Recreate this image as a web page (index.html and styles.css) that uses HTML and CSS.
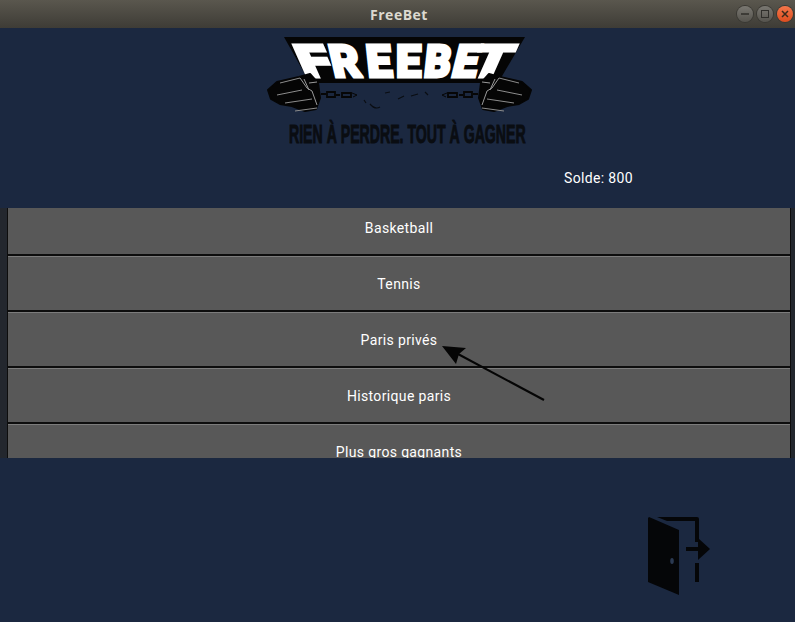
FILE: index.html
```html
<!DOCTYPE html>
<html lang="fr">
<head>
    <meta charset="UTF-8">
    <title>FreeBet</title>
    <link rel="stylesheet" href="styles.css">
</head>
<body>

<div class="titlebar">
    <span></span>
    <span class="title">FreeBet</span>
    <div class="win-btns">
        <span class="win-btn"><svg width="16" height="16" viewBox="0 0 16 16"><path d="M4 8h8" stroke="#2f2e2a" stroke-width="1.5"/></svg></span>
        <span class="win-btn"><svg width="16" height="16" viewBox="0 0 16 16"><rect x="4.5" y="4.5" width="7" height="7" fill="none" stroke="#2f2e2a"/></svg></span>
        <span class="win-btn win-close"><svg width="16" height="16" viewBox="0 0 16 16"><path d="M5 5l6 6M11 5l-6 6" stroke="#3a2a1c" stroke-width="1.5"/></svg></span>
    </div>
</div>

<div class="logo">
    <!-- viewBox keeps the window coordinates of the logo -->
    <svg width="281" height="120" viewBox="257 28 281 120">
        <defs>
            <g id="fist">
                <path d="M268 90 L277 82 L299 77 L310 74 L318 83 L320 98 L316 109 L305 111 L292 106 L280 104 L271 99 Z" fill="#050505" stroke="#050505" stroke-width="2" stroke-linejoin="round"/>
                <path d="M280 83 L300 78 M277 95 L302 90 M285 103 L312 99 M295 111 L317 108" fill="none" stroke="#8c8c8c" stroke-width="1"/>
                <path d="M300 78 L307 88 L312 91 L317 105 M304 79 L309 90 M309 83 L317 82" fill="none" stroke="#9a9a9a" stroke-width="1"/>
                <path d="M321 94 h5 M327 92 h8 v5 h-8 z M336 95 h4 M342 93 h9 v4 h-9 z" fill="none" stroke="#060606" stroke-width="1.8"/>
                <path d="M352 93 l5 2 -4 2" fill="none" stroke="#060606" stroke-width="1"/>
            </g>
        </defs>
        <polygon points="284,37 525,37 498,83 310,83" fill="#050505"/>
        <!-- letters fan out like the original wordmark, so each one has its own skew -->
        <g class="logo-name" aria-label="FREEBET">
            <text transform="translate(305 77) skewX(24) scale(1.3 1)">F</text>
            <text transform="translate(334 77) skewX(13) scale(1 1)">R</text>
            <text transform="translate(368 77) skewX(6) scale(1 1)">E</text>
            <text transform="translate(396 77) skewX(0) scale(1 1)">E</text>
            <text transform="translate(423 77) skewX(-6) scale(.92 1)">B</text>
            <text transform="translate(450 77) skewX(-14) scale(1 1)">E</text>
            <text transform="translate(467 77) skewX(-24) scale(1.3 1)">T</text>
        </g>
        <use href="#fist"/>
        <use href="#fist" transform="translate(799 0) scale(-1 1)"/>
        <path d="M370 104 q5 6 10 3 M385 93 l5 -1 M398 99 l6 -3 M411 96 l7 -2 M425 92 l3 3 M364 100 l2 3" fill="none" stroke="#0a0d12" stroke-width="1.2"/>
        <text class="logo-tag" transform="translate(289 142.5) scale(.565 1)">RIEN À PERDRE. TOUT À GAGNER</text>
    </svg>
</div>

<div class="balance">Solde: 800</div>

<div class="menu">
    <div class="menu-items">
        <div class="menu-item">Basketball</div>
        <div class="menu-item">Tennis</div>
        <div class="menu-item">Paris privés</div>
        <div class="menu-item">Historique paris</div>
        <div class="menu-item">Plus gros gagnants</div>
    </div>
</div>

<div class="footer">
    <svg width="62" height="80" viewBox="648 516 62 80">
        <polygon points="648,518 649,517 679,530 679,595 648,582" fill="#050608"/>
        <path d="M657 517 H697 Q699 517 699 519 V542 H695 V521 H667 Z" fill="#050608"/>
        <rect x="695" y="563" width="4" height="19" fill="#050608"/>
        <rect x="686" y="547" width="12" height="4" fill="#050608"/>
        <polygon points="698,538 710,549 698,560" fill="#050608"/>
        <ellipse cx="672" cy="561" rx="1.8" ry="3" fill="#2b3a52"/>
    </svg>
</div>

<svg class="arrow" width="110" height="62" viewBox="438 342 110 62">
    <line x1="544" y1="400" x2="458" y2="354" stroke="#050505" stroke-width="2"/>
    <polygon points="442,346 466,348 459,354 456,364" fill="#050505"/>
</svg>

</body>
</html>
```

FILE: styles.css
```css
body {
    margin: 0;
    height: 622px;
    overflow: hidden;
    background-color: #1b2840;
    font-family: Roboto, sans-serif;
    font-size: 14px;
    letter-spacing: 0.35px;
    color: white;
}
.titlebar {
    height: 28px;
    display: grid;
    grid-template-columns: 1fr auto 1fr;
    align-items: center;
    background: linear-gradient(#5a574e, #3e3c36);
}
.title {
    padding-left: 3px;
    font-family: "Open Sans", sans-serif;
    font-weight: bold;
    font-size: 14px;
    letter-spacing: 0.5px;
    color: #dcd9d0;
}
.win-btns {
    display: flex;
    justify-content: flex-end;
    gap: 4px;
    padding-right: 2px;
}
.win-btn {
    width: 16px;
    height: 16px;
    border-radius: 50%;
    background: linear-gradient(#7a7872, #55534d);
    box-shadow: 0 0 0 1px #3a3934;
}
.win-close {
    background: linear-gradient(#f4764a, #dd4d1f);
}
.win-btn svg {
    display: block;
}
.logo {
    height: 120px;
    display: flex;
    justify-content: center;
}
.logo-name {
    font-family: Roboto, sans-serif;
    font-weight: 900;
    font-size: 45px;
    letter-spacing: 0;
    fill: white;
    stroke: white;
    stroke-width: 3px;
}
.logo-tag {
    font-family: "Liberation Sans", sans-serif;
    font-weight: bold;
    font-size: 25px;
    letter-spacing: 0;
    fill: #0a0d12;
    stroke: #0a0d12;
    stroke-width: 1px;
}
.balance {
    height: 60px;
    display: flex;
    align-items: center;
    justify-content: flex-end;
    padding-right: 162px;
}
/* list is scrolled a little, first row is cut at the top */
.menu {
    height: 250px;
    overflow: hidden;
    padding: 0 4px 0 7px;
    background: #23272e;
}
.menu-items {
    margin-top: -8px;
    padding: 0 1px;
    display: flex;
    flex-direction: column;
    gap: 2px;
    background: #0d0d0d;
}
.menu-item {
    height: 54px;
    box-sizing: border-box;
    border-top: 1px solid #7c7c7c;
    display: flex;
    align-items: center;
    justify-content: center;
    background: #585858;
}
.footer {
    padding: 58px 0 0 648px;
}
.footer svg {
    display: block;
}
.arrow {
    position: absolute;
    left: 438px;
    top: 342px;
}
```
